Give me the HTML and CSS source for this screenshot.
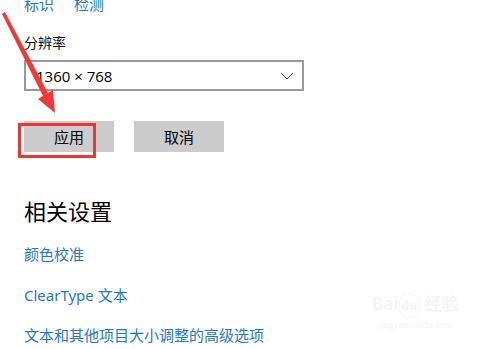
FILE: index.html
```
<!DOCTYPE html>
<html lang="zh-CN">
<head>
    <meta charset="UTF-8">
    <title>显示设置</title>
    <link rel="stylesheet" href="styles.css">
</head>
<body>
    <div class="page">
        <div class="main">
            <div class="toplinks">
                <a href="#">标识</a>
                <a href="#">检测</a>
            </div>
            <div class="label">分辨率</div>
            <div class="select">
                <span>1360 × 768</span>
                <svg class="chevron" width="14" height="8" viewBox="0 0 14 8"><polyline points="1,1 7,7 13,1" fill="none" stroke="#555" stroke-width="1"/></svg>
            </div>
            <div class="btns">
                <button class="btn">应用</button>
                <button class="btn">取消</button>
            </div>
            <h2 class="title">相关设置</h2>
            <ul class="related">
                <li><a href="#">颜色校准</a></li>
                <li><a href="#">ClearType 文本</a></li>
                <li><a href="#">文本和其他项目大小调整的高级选项</a></li>
            </ul>
            <div class="mark">
                <div class="mark-big">Bai<span class="paw">du</span> 经验</div>
                <div class="mark-small">jingyan.baidu.com</div>
            </div>
        </div>
        <div class="bar"></div>
        <!-- 标注：箭头和红框 -->
        <svg class="note" width="487" height="349" viewBox="0 0 487 349">
            <polygon points="2,14 5,12 48,93 53,90 55,113 38,99 43,96" fill="#f03a3a"/>
            <rect x="19.5" y="124.5" width="75" height="32" fill="none" stroke="#ee3535" stroke-width="3"/>
        </svg>
    </div>
</body>
</html>
```
FILE: styles.css
```
*{margin:0;padding:0;box-sizing:border-box;}
body{
    background:#fff;
    font-family:"Noto Sans","Noto Sans CJK SC",sans-serif;
    color:#000;
    overflow:hidden;
}
.page{
    width:487px;
    height:349px;
    display:flex;
    flex-direction:column;
    position:relative;
}
.main{
    flex:1;
    padding-left:24px;
    position:relative;
}
.toplinks{
    display:flex;
    gap:20px;
    margin-top:-6px;
    font-size:15px;
    line-height:20px;
}
.toplinks a{color:#1e78d2;text-decoration:none;}
.label{
    margin-top:19px;
    font-size:14px;
    line-height:20px;
    color:#111;
}
.select{
    margin-top:7px;
    width:280px;
    height:31px;
    border:2px solid #999;
    display:flex;
    align-items:center;
    justify-content:space-between;
    padding:0 8px 0 10px;
    font-size:15px;
}
.select span{font-family:"Open Sans","Noto Sans",sans-serif;}
.btns{
    margin-top:30px;
    display:flex;
    gap:20px;
}
.btn{
    width:90px;
    height:31px;
    border:none;
    background:#ccc;
    font-family:"Noto Sans CJK SC",sans-serif;
    font-size:15px;
    color:#000;
}
.title{
    margin-top:44px;
    font-weight:normal;
    font-size:22px;
    line-height:30px;
    color:#000;
}
.related{
    list-style:none;
    margin-top:18px;
}
.related li{
    font-size:15px;
    line-height:20px;
    margin-bottom:20.5px;
}
.related a{color:#1e78d2;text-decoration:none;}
.bar{
    height:4px;
    background:#000;
}
.note{
    position:absolute;
    left:0;
    top:0;
    pointer-events:none;
}
.mark{
    position:absolute;
    left:372px;
    top:293px;
    color:#f4f4f4;
    text-align:center;
}
.mark-big{font-size:17px;font-weight:bold;line-height:22px;}
.paw{
    display:inline-block;
    border:1px solid #f4f4f4;
    border-radius:8px;
    font-size:12px;
    padding:0 2px;
}
.mark-small{font-size:10px;line-height:14px;font-family:"Liberation Serif",serif;}
```
